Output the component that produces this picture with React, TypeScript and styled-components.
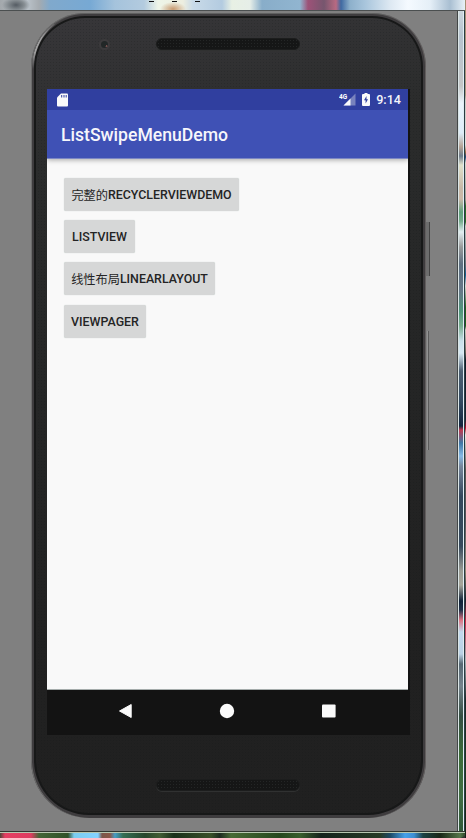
import React from "react";
import styled, { createGlobalStyle } from "styled-components";

const GlobalStyle = createGlobalStyle`
  * { box-sizing: border-box; }
  body { margin: 0; overflow: hidden; background: #333; font-family: Roboto, "Noto Sans CJK SC", sans-serif; }
`;

const Desktop = styled.div`
  width: 466px;
  height: 838px;
  display: grid;
  grid-template-columns: 457px 8px 1px;
  grid-template-rows: 11px 820px 7px;
`;

const TopGlass = styled.div`
  grid-column: 1 / 3;
  display: flex;
  justify-content: flex-start;
  gap: 18px;
  padding-left: 149px;
  border-bottom: 1px solid #4b4f50;
  background:
    radial-gradient(ellipse 14px 8px at 16px 5px, #555c63, #868d92 60%, transparent),
    radial-gradient(ellipse 13px 7px at 173px 9px, #c89a70, transparent),
    linear-gradient(90deg, #a3a8ac 0, #b9c1c8 28px, #a5abb0 39px, #80a9cc 50px, #77a9d4 90px, #a5c3dc 115px, #b3cbdf 144px, #eef5e8 158px, #edeee0 183px, #c9dae8 193px, #b3cbe0 222px, #e8f0e4 232px, #e6eee8 250px, #88adc9 262px, #91b5d0 300px, #9d5278 308px, #76566e 324px, #b96a82 336px, #3f69a1 341px, #8db0cb 350px, #a8c5dc 365px, #dde8f2 390px, #f5faff 408px, #e5eff7 430px, #a9bfd2 450px, #e8f1f7 465px);
`;

const Dash = styled.i`
  width: 5px;
  height: 1px;
  margin-top: 1px;
  background: #111;
`;

const OuterDesktop = styled.div`
  grid-column: 3;
  grid-row: 1 / 4;
  background: linear-gradient(180deg, #a58e72 0, #aa997e 95px, #c7c8c1 100px, #dededb 145px, #9d7043 152px, #17477e 157px, #d4d6cc 163px, #9d988d 200px, #2d6d2c 206px, #2d6d2c 222px, #c5cac1 226px, #656e76 265px, #146396 275px, #d3d5ce 286px, #236120 307px, #236120 326px, #c8c9bd 330px, #6e675b 352px, #131e28 360px, #182631 420px, #b70c26 428px, #e6e6df 435px, #5b5650 470px, #56545b 520px, #938975 570px, #17202a 600px, #cd2e49 622px, #aab2b6 660px, #1c2a29 700px, #203a24 770px, #152014 838px);
`;

const RightGlass = styled.div`
  border-left: 1px solid #434747;
  border-right: 1px solid #293b42;
  box-shadow: inset 1px 0 #dbe5e6, inset -1px 0 #dfedf3;
  background: linear-gradient(180deg, #cbd5dc 0, #b6c3cf 25px, #c4c6c6 75px, #eaf4fb 92px, #ddecf8 122px, #b4a294 136px, #6f7c8b 145px, #dfe1cb 154px, #c7b9a8 177px, #cbb8a8 188px, #61a17c 201px, #75ac8b 210px, #e2eef1 221px, #9a9b9b 236px, #5e7081 253px, #677888 280px, #4f967a 300px, #79ad8f 315px, #c9e0ea 330px, #d6e8f3 342px, #4d6072 360px, #344b61 390px, #12263e 415px, #bd3a50 419px, #3f78a6 432px, #85b9e5 445px, #78879c 455px, #34485d 485px, #36495c 535px, #9a9c94 560px, #a5a59a 574px, #102238 590px, #203047 599px, #dc7281 609px, #c1d9ed 621px, #bad1e5 643px, #566873 653px, #75838c 675px, #354f43 705px, #3c6c38 745px, #416d43 786px, #315839 820px);
`;

const BottomGlass = styled.div`
  grid-column: 1 / 3;
  border-top: 1px solid #303630;
  box-shadow: inset 0 1px #b7c7b1;
  border-bottom-right-radius: 5px;
  background:
    linear-gradient(90deg, #4d4638 0, #e43e62 5px, #de3c60 31px, #436537 39px, #2f5127 68px, #7accf0 74px, #84d2ff 98px, #7b5549 102px, #8a5747 110px, #449cc5 115px, #356d53 123px, #26462d 145px, #415c34 160px, #1a301a 174px, #395029 211px, #1c2b20 220px, #476a36 231px, #26481e 280px, #385f2c 300px, #14231b 321px, #263b26 380px, #1b4964 390px, #46a0e9 405px, #3d8ed2 414px, #1c4243 423px, #182717 440px, #55764a 460px, #2e4a29 465px);
`;

const EmulatorPane = styled.main`
  position: relative;
  display: flex;
  padding: 2px 0 0 31px;
  background: #808080;
`;

const Phone = styled.section`
  width: 395px;
  height: 805px;
  display: grid;
  grid-template-rows: 76px 646px 1fr;
  padding-left: 16px;
  border-radius: 54px 54px 58px 58px;
  background:
    radial-gradient(circle, #15191938 0.6px, transparent 0.9px) 0 0 / 3px 3px,
    linear-gradient(170deg, #38373a 0, #2b2c2c 18%, #262727 40%, #212121 75%, #202020 100%);
  box-shadow: inset 1px 0 #6c6c6c, inset -1px 0 #625e5e,
    inset 0 1px #606060, inset 0 0 0 3px #3e3c3e, inset 0 0 0 5px #171818;
`;

const EdgeHighlight = styled.div`
  position: absolute;
  left: 32px;
  top: 2px;
  width: 54px;
  height: 56px;
  border-top-left-radius: 54px;
  border-left: 2px solid #a0a0a0;
  border-top: 1px solid #777;
  -webkit-mask-image: linear-gradient(180deg, transparent 5%, #000 45%, #000 70%, transparent 100%);
`;

const TopBezel = styled.header`
  display: grid;
  grid-template-columns: 109px 144px;
  padding-top: 25px;
`;

const Camera = styled.i`
  width: 11px;
  height: 11px;
  margin: 1px 0 0 52px;
  border: 2px solid #3d3b3d;
  border-radius: 50%;
  background: radial-gradient(circle at 80% 75%, #76504f 0 0.8px, #222727 1.3px);
`;

const Grille = styled.i`
  width: 144px;
  height: 12px;
  border-radius: 6px;
  border: 1px solid #1c1d1d;
  background: radial-gradient(circle, #242626 0.6px, transparent 0.9px) 0 0 / 3px 3px, #151616;
  box-shadow: 0 1px #303131;
`;

const BottomBezel = styled.footer`
  padding: 44px 0 0 109px;
  display: flex;
`;

const Screen = styled.div`
  width: 363px;
  display: grid;
  grid-template-rows: 21px 48px 532px 45px;
  background: #131313;
`;

const StatusBar = styled.div`
  width: 361px;
  display: flex;
  align-items: center;
  padding: 0 7px 0 10px;
  background: #303f9f;
  color: #f4f4fa;
`;

const StatusIcons = styled.div`
  display: flex;
  align-items: center;
  margin-left: auto;
`;

const IconGap = styled.span`
  width: 6px;
`;

const Clock = styled.time`
  margin-left: 6px;
  font-size: 12.6px;
  font-weight: 500;
  line-height: 20px;
`;

const Toolbar = styled.div`
  position: relative;
  width: 361px;
  padding: 0 14px;
  display: flex;
  align-items: center;
  background: #3f51b5;
  box-shadow: 0 1px #7c87c4, 0 2px 5px #0005;
  clip-path: inset(0 0 -8px 0);
`;

const Title = styled.h1`
  margin: 2px 0 0;
  color: #f6f6fb;
  font-size: 17.6px;
  line-height: 24px;
  font-weight: 500;
`;

const Content = styled.div`
  width: 361px;
  padding: 19.9px 17px;
  display: flex;
  flex-direction: column;
  align-items: flex-start;
  gap: 9.25px;
  background: #f9f9f9;
  border-bottom: 1px solid #a5acab;
`;

const DemoButton = styled.button<{ $width: number }>`
  width: ${({ $width }) => $width}px;
  height: 33px;
  padding: 1px 0 0;
  display: flex;
  align-items: center;
  justify-content: center;
  border: 0;
  border-radius: 2px;
  background: #d6d7d7;
  box-shadow: 0 0 1px #bdcac6;
  color: #242424;
  font: 500 12.4px/16px Roboto, sans-serif;
  white-space: nowrap;
`;

const Chinese = styled.span`
  font-family: "Noto Sans CJK SC", sans-serif;
  font-size: 12.2px;
  font-weight: 400;
`;

const NavBar = styled.nav`
  display: flex;
  align-items: center;
  justify-content: space-between;
  padding: 0 73px 3px 71px;
`;

const SideKey = styled.i<{ $top: number; $height: number; $left: number; $faint?: boolean }>`
  position: absolute;
  left: ${({ $left }) => $left}px;
  top: ${({ $top }) => $top}px;
  width: ${({ $faint }) => ($faint ? 2 : 4)}px;
  height: ${({ $height }) => $height}px;
  border-right: 1px solid ${({ $faint }) => ($faint ? "#5b5b5b" : "#444")};
  background: ${({ $faint }) => ($faint ? "#929292" : "#6d6d6d")};
`;

const demos = [
  { chinese: "完整的", label: "RECYCLERVIEWDEMO", width: 175 },
  { chinese: "", label: "LISTVIEW", width: 71 },
  { chinese: "线性布局", label: "LINEARLAYOUT", width: 151 },
  { chinese: "", label: "VIEWPAGER", width: 82 },
];

function SdCardIcon() {
  return (
    <svg width="12" height="14" viewBox="0 0 12 14">
      <path d="M4 0.5h6q1 0 1 1v11q0 1-1 1H1q-1 0-1-1V4.5z" fill="#fafafa" />
      <path d="M4.7 2v2.5M7 2v2.5M9.2 2v2.5" stroke="#303f9f" />
    </svg>
  );
}

function SignalIcon() {
  return (
    <svg width="17" height="13" viewBox="0 0 17 13">
      <path d="M4.5 12.5 16.5.5v12z" fill="#7882bd" />
      <path d="M4.5 12.5 11.5 5.5v7z" fill="#fafafa" />
      <text x="0" y="5.8" fill="#fff" stroke="#303f9f" strokeWidth="1" paintOrder="stroke" fontFamily="Roboto" fontSize="6.5" fontWeight="700">4G</text>
    </svg>
  );
}

function BatteryIcon() {
  return (
    <svg width="8" height="13" viewBox="0 0 8 13">
      <path d="M2.5 0h3v1H7q1 0 1 1v10q0 1-1 1H1q-1 0-1-1V2q0-1 1-1h1.5z" fill="#fafafa" />
      <path d="M4.5 3 2 7.3h1.6v3.2L6 6.3H4.5z" fill="#303f9f" />
    </svg>
  );
}

export default function App() {
  return (
    <>
      <GlobalStyle />
      <Desktop>
        <TopGlass><Dash /><Dash /><Dash /></TopGlass>
        <OuterDesktop />
        <EmulatorPane>
          <Phone>
            <TopBezel><Camera /><Grille /></TopBezel>
            <Screen>
              <StatusBar>
                <SdCardIcon />
                <StatusIcons>
                  <SignalIcon />
                  <IconGap />
                  <BatteryIcon />
                  <Clock>9:14</Clock>
                </StatusIcons>
              </StatusBar>
              <Toolbar><Title>ListSwipeMenuDemo</Title></Toolbar>
              <Content>
                {demos.map(({ chinese, label, width }) => (
                  <DemoButton key={label} $width={width}>
                    {chinese && <Chinese>{chinese}</Chinese>}{label}
                  </DemoButton>
                ))}
              </Content>
              <NavBar>
                <svg width="15" height="16" viewBox="0 0 15 16"><path d="M1.5 8 13.2 1.5v13z" fill="#fafafa" stroke="#fafafa" strokeLinejoin="round" /></svg>
                <svg width="16" height="16"><circle cx="8" cy="8" r="7.2" fill="#fafafa" /></svg>
                <svg width="16" height="16"><rect x="1" y="1.5" width="13.6" height="13" rx="1" fill="#fafafa" /></svg>
              </NavBar>
            </Screen>
            <BottomBezel><Grille /></BottomBezel>
          </Phone>
          <EdgeHighlight />
          <SideKey $left={426} $top={211} $height={54} />
          <SideKey $left={427} $top={320} $height={119} $faint />
        </EmulatorPane>
        <RightGlass />
        <BottomGlass />
      </Desktop>
    </>
  );
}
